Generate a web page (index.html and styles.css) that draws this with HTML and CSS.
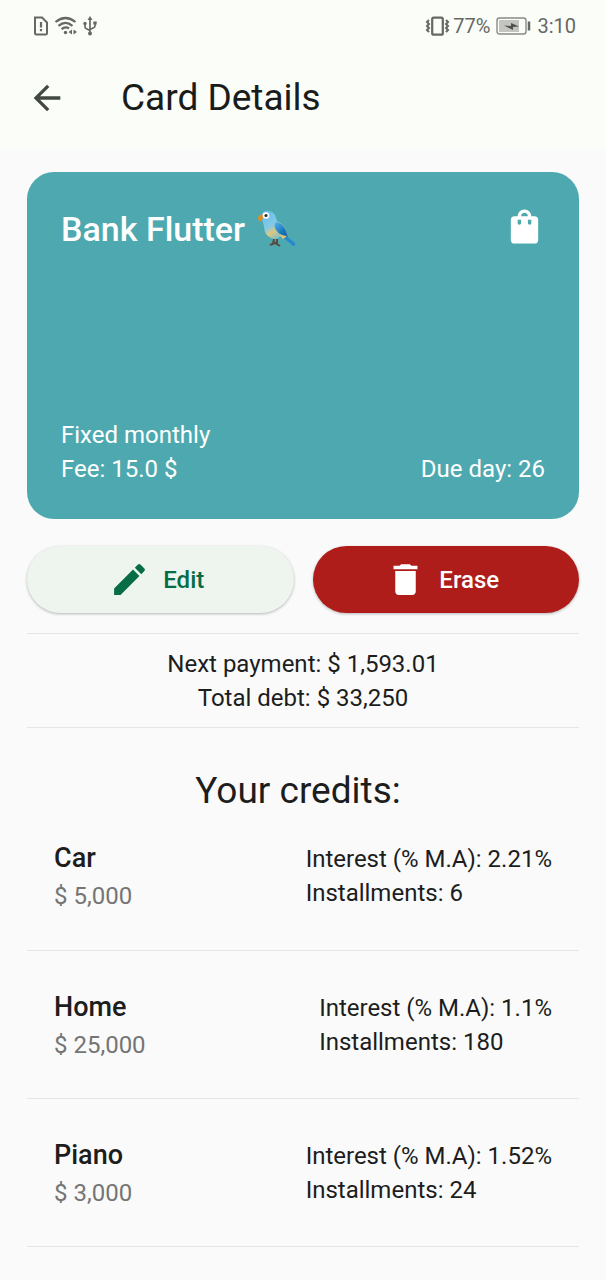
FILE: index.html
```html
<!DOCTYPE html>
<html lang="en">
<head>
<meta charset="utf-8">
<meta name="viewport" content="width=device-width, initial-scale=1">
<title>Card Details</title>
<link rel="stylesheet" href="styles.css">
</head>
<body>
<header class="top">
  <div class="status">
    <div class="status-group status-left">
      <svg width="16" height="20" viewBox="0 0 16 20" fill="none" stroke="#666864" stroke-width="2"><path d="M2 1.500h7l5 5V17q0 1.500-1.500 1.500h-9Q2 18.500 2 17z"/><path d="M8 6v5.500M8 13v2.300" stroke-width="2.200"/></svg>
      <svg width="24" height="20" viewBox="0 0 24 20" fill="none" stroke="#666864" stroke-width="2.200"><path d="M1.500 6Q11.500-2 21.500 6M4.500 9.800Q11.500 4 18.500 9.800M7.500 13.200Q11.500 10 15 12.500"/><circle cx="11.500" cy="16.500" r="1.700" fill="#666864" stroke="none"/><path d="M18 13.500v5l-3.500-2.500zM19.500 13.500v5l3.500-2.500z" fill="#666864" stroke="none"/></svg>
      <svg width="14" height="20" viewBox="0 0 14 20" fill="none" stroke="#666864" stroke-width="1.700"><path d="M7 3v14M2 8v3q0 1.500 2 2l3 1.500M12 7v3q0 1.500-2 2l-3 1.500"/><path d="M7 0l2.500 4h-5zM10.300 5.500h3.400v3h-3.400z" fill="#666864" stroke="none"/><circle cx="2" cy="7.500" r="1.700" fill="#666864" stroke="none"/><circle cx="7" cy="17.500" r="2" fill="#666864" stroke="none"/></svg>
    </div>
    <div class="status-group">
      <svg width="26" height="20" viewBox="0 0 26 20" fill="none" stroke="#666864"><rect x="7.200" y="1.700" width="10.600" height="17" rx="1.500" stroke-width="2.200"/><path d="M4 4L2 6l2 2-2 2 2 2-2 2 2 2M21 4l2 2-2 2 2 2-2 2 2 2-2 2" stroke-width="2"/></svg>
      <span>77%</span>
      <svg class="battery" width="35" height="20" viewBox="0 0 35 20"><rect x="1" y="2" width="29" height="16" rx="2.500" fill="none" stroke="#888a86" stroke-width="1.400"/><rect x="3" y="4" width="20" height="12" fill="#c4c5c1"/><path d="M8 9.500l7 .5V7l8 3.500-6 .5v3z" fill="#4e504d"/><path d="M33 5.500v9" stroke="#666864" stroke-width="2.500"/></svg>
      <span>3:10</span>
    </div>
  </div>
  <div class="appbar">
    <button class="back" type="button" aria-label="Back"><svg width="40" height="40" viewBox="0 0 24 24" fill="#424943"><path d="M20 11H7.830l5.590-5.590L12 4l-8 8 8 8 1.410-1.410L7.830 13H20v-2z"/></svg></button>
    <h1>Card Details</h1>
  </div>
</header>
<main>
  <section class="card">
    <div class="card-row">
      <h2>Bank Flutter
        <svg width="40" height="40" viewBox="0 0 40 40" role="img" aria-label="Bird">
          <defs>
            <linearGradient id="body" x1="0" y1="0" x2="0.600" y2="1"><stop offset="0" stop-color="#62bdf0"/><stop offset=".55" stop-color="#85c9e5"/><stop offset=".75" stop-color="#dcc77d"/><stop offset="1" stop-color="#78bfd0"/></linearGradient>
            <linearGradient id="wing" x1="0" y1="0" x2="1" y2="1"><stop offset="0" stop-color="#58b3ee"/><stop offset=".6" stop-color="#1878bd"/><stop offset="1" stop-color="#155b91"/></linearGradient>
          </defs>
          <path d="M17 30l-1 5M20 30v5M13 36l5-2 5 3M16 33l5 2" fill="none" stroke="#594b42" stroke-width="2"/>
          <path d="M28 26l10 8q1 2-1 3-2 0-3-2l-9-7z" fill="#2589ce"/>
          <path d="M4 7Q6 1 12 2q6 1 7 7l1 3q7 3 10 12l1 4-6-2q-5 6-11 3Q7 26 7 17z" fill="url(#body)"/>
          <path d="M19 13q7 1 10 9l2 6q-8-1-12-7-3-5 0-8z" fill="url(#wing)"/>
          <path d="M22 25q5 2 8 2l-4 3z" fill="#e5c86c"/>
          <path d="M5 5Q1 6 1 10l2 3 4-5z" fill="#dc8d24"/>
          <circle cx="9" cy="6.500" r="3.300" fill="#fff"/><circle cx="9" cy="6.500" r="1.600" fill="#29303a"/>
        </svg>
      </h2>
      <svg class="bag" width="41" height="41" viewBox="0 0 24 24" fill="#fff"><path d="M18 6h-2c0-2.210-1.790-4-4-4S8 3.790 8 6H6c-1.100 0-2 .9-2 2v12c0 1.100.9 2 2 2h12c1.100 0 2-.9 2-2V8c0-1.100-.9-2-2-2zm-8 4c0 .55-.45 1-1 1s-1-.45-1-1V8h2v2zm2-6c1.100 0 2 .9 2 2h-4c0-1.100.9-2 2-2zm4 6c0 .55-.45 1-1 1s-1-.45-1-1V8h2v2z"/></svg>
    </div>
    <div class="card-row card-foot">
      <p>Fixed monthly<br>Fee: 15.0 $</p>
      <p>Due day: 26</p>
    </div>
  </section>
  <div class="actions">
    <button class="btn edit" type="button"><svg width="41" height="41" viewBox="0 0 24 24" fill="currentColor"><path d="M3 17.250V21h3.750L17.810 9.940l-3.750-3.750L3 17.250zM20.710 7.040a1 1 0 0 0 0-1.410l-2.340-2.340a1 1 0 0 0-1.410 0l-1.830 1.830 3.750 3.750 1.830-1.830z"/></svg>Edit</button>
    <button class="btn erase" type="button"><svg width="41" height="41" viewBox="0 0 24 24" fill="currentColor"><path d="M6 19c0 1.100.9 2 2 2h8c1.100 0 2-.9 2-2V7H6v12zM19 4h-3.500l-1-1h-5l-1 1H5v2h14V4z"/></svg>Erase</button>
  </div>
  <section class="summary">
    <p>Next payment: $ 1,593.01</p>
    <p>Total debt: $ 33,250</p>
  </section>
  <h2 class="heading">Your credits:</h2>
  <ul class="credits">
    <li><div><h3>Car</h3><p class="amount">$ 5,000</p></div><p>Interest (% M.A): 2.21%<br>Installments: 6</p></li>
    <li><div><h3>Home</h3><p class="amount">$ 25,000</p></div><p>Interest (% M.A): 1.1%<br>Installments: 180</p></li>
    <li><div><h3>Piano</h3><p class="amount">$ 3,000</p></div><p>Interest (% M.A): 1.52%<br>Installments: 24</p></li>
  </ul>
</main>
</body>
</html>
```
FILE: styles.css
```css
* { box-sizing: border-box; }
body {
  margin: 0;
  background: #fafafa;
  color: #1c1d1c;
  font-family: Roboto, "Liberation Sans", sans-serif;
  font-size: 24px;
  line-height: 34px;
}
h1, h2, h3, p, ul { margin: 0; padding: 0; font-weight: 400; }
svg { display: block; flex: none; }
button { font: inherit; border: 0; }
.top { background: #fbfdf8; }
.status {
  display: flex;
  justify-content: space-between;
  align-items: center;
  height: 52px;
  padding: 0 30px 0 33px;
  color: #666864;
  font-size: 20px;
}
.status-group { display: flex; align-items: center; gap: 2px; }
.status-left { gap: 5px; }
.battery { margin: 0 4px; }
.appbar { display: flex; align-items: center; gap: 54px; height: 97px; padding: 0 27px 6px; }
.back { padding: 0; background: none; }
.appbar h1 { font-size: 37px; line-height: 48px; color: #191c1a; }
main { padding: 23px 27px 0; }
.card {
  display: flex;
  flex-direction: column;
  justify-content: space-between;
  min-height: 347px;
  padding: 33px 34px;
  border-radius: 27px;
  background: #4da9af;
  color: #fff;
}
.card-row { display: flex; justify-content: space-between; align-items: center; }
.card-row h2 { display: flex; align-items: center; gap: 12px; font-size: 34px; line-height: 48px; font-weight: 500; }
.bag { margin-bottom: 6px; }
.card-foot { align-items: flex-end; }
.actions { display: flex; gap: 19px; margin: 27px 0 20px; }
.btn {
  flex: 1;
  display: flex;
  justify-content: center;
  align-items: center;
  gap: 13px;
  height: 67px;
  padding: 0 7px 0 0;
  border-radius: 34px;
  font-weight: 500;
  box-shadow: 0 1px 3px rgba(0, 0, 0, .28);
}
.edit { background: #edf5ee; color: #066d46; }
.erase { background: #ae1d1a; color: #fff; }
.summary { padding: 13px 0 12px; border: solid #e5e6e5; border-width: 1px 0; text-align: center; }
.heading { padding: 39px 10px 19px 0; font-size: 37px; line-height: 48px; text-align: center; }
.credits { list-style: none; }
.credits li {
  display: flex;
  justify-content: space-between;
  align-items: center;
  height: 148px;
  padding: 0 27px;
  border-bottom: 1px solid #e5e6e5;
}
.credits li:first-child { height: 117px; padding-bottom: 32px; }
.credits h3 { font-size: 27px; line-height: 40px; font-weight: 500; }
.amount { color: #747574; line-height: 36px; }
```
